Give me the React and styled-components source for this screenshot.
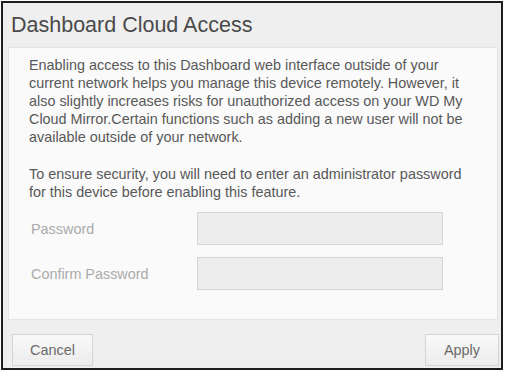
import React from "react";
import styled, { createGlobalStyle } from "styled-components";

const Global = createGlobalStyle`
  html, body { margin: 0; padding: 0; background: #ffffff; }
  body { font-family: "Liberation Sans", Arial, sans-serif; }
  #root { width: 507px; height: 373px; }
`;

const Frame = styled.div`
  box-sizing: border-box;
  width: 502px;
  height: 369px;
  margin: 1px 0 0 1px;
  border: 2px solid #1e1e1e;
  background: #efefef;
  display: flex;
  flex-direction: column;
`;

const Header = styled.div`
  height: 44px;
  flex: none;
  display: flex;
  align-items: center;
  padding-left: 8px;
  font-size: 21.5px;
  color: #4a4a4a;
`;

const Panel = styled.div`
  flex: 1;
  margin: 0 3px 0 5px;
  background: #fafafa;
  border: 1px solid #e4e4e4;
  padding: 8px 19px 0 20px;
  color: #585858;
  font-size: 14.4px;
  line-height: 18px;
`;

const Para = styled.p`
  margin: 0 0 ${(p) => p.$gap || 0}px;
`;

const FormRow = styled.div`
  display: flex;
  align-items: center;
  margin-bottom: 12px;
  padding-left: 2px;
`;

const Label = styled.label`
  width: 166px;
  flex: none;
  color: #ababab;
  font-size: 14.4px;
`;

const Input = styled.div`
  box-sizing: border-box;
  width: 246px;
  height: 33px;
  background: #ededed;
  border: 1px solid #d6d6d6;
`;

const Footer = styled.div`
  height: 48px;
  flex: none;
  display: flex;
  align-items: flex-end;
  justify-content: space-between;
  padding: 0 2px 2px 9px;
  box-sizing: border-box;
`;

const Button = styled.button`
  box-sizing: border-box;
  width: ${(p) => p.$w}px;
  height: 32px;
  border: 1px solid #d4d4d4;
  background: linear-gradient(#f9f9f9, #ececec);
  color: #6a6a6a;
  font-family: "Liberation Sans", Arial, sans-serif;
  font-size: 14.4px;
  padding: 0;
  text-align: center;
`;

export default function App() {
  return (
    <>
      <Global />
      <Frame>
        <Header>Dashboard Cloud Access</Header>
        <Panel>
          <Para $gap={19}>
            Enabling access to this Dashboard web interface outside of your
            current network helps you manage this device remotely. However, it
            also slightly increases risks for unauthorized access on your WD My
            Cloud Mirror.Certain functions such as adding a new user will not be
            available outside of your network.
          </Para>
          <Para $gap={11}>
            To ensure security, you will need to enter an administrator password
            for this device before enabling this feature.
          </Para>
          <FormRow>
            <Label>Password</Label>
            <Input />
          </FormRow>
          <FormRow>
            <Label>Confirm Password</Label>
            <Input />
          </FormRow>
        </Panel>
        <Footer>
          <Button $w={81}>Cancel</Button>
          <Button $w={74}>Apply</Button>
        </Footer>
      </Frame>
    </>
  );
}
